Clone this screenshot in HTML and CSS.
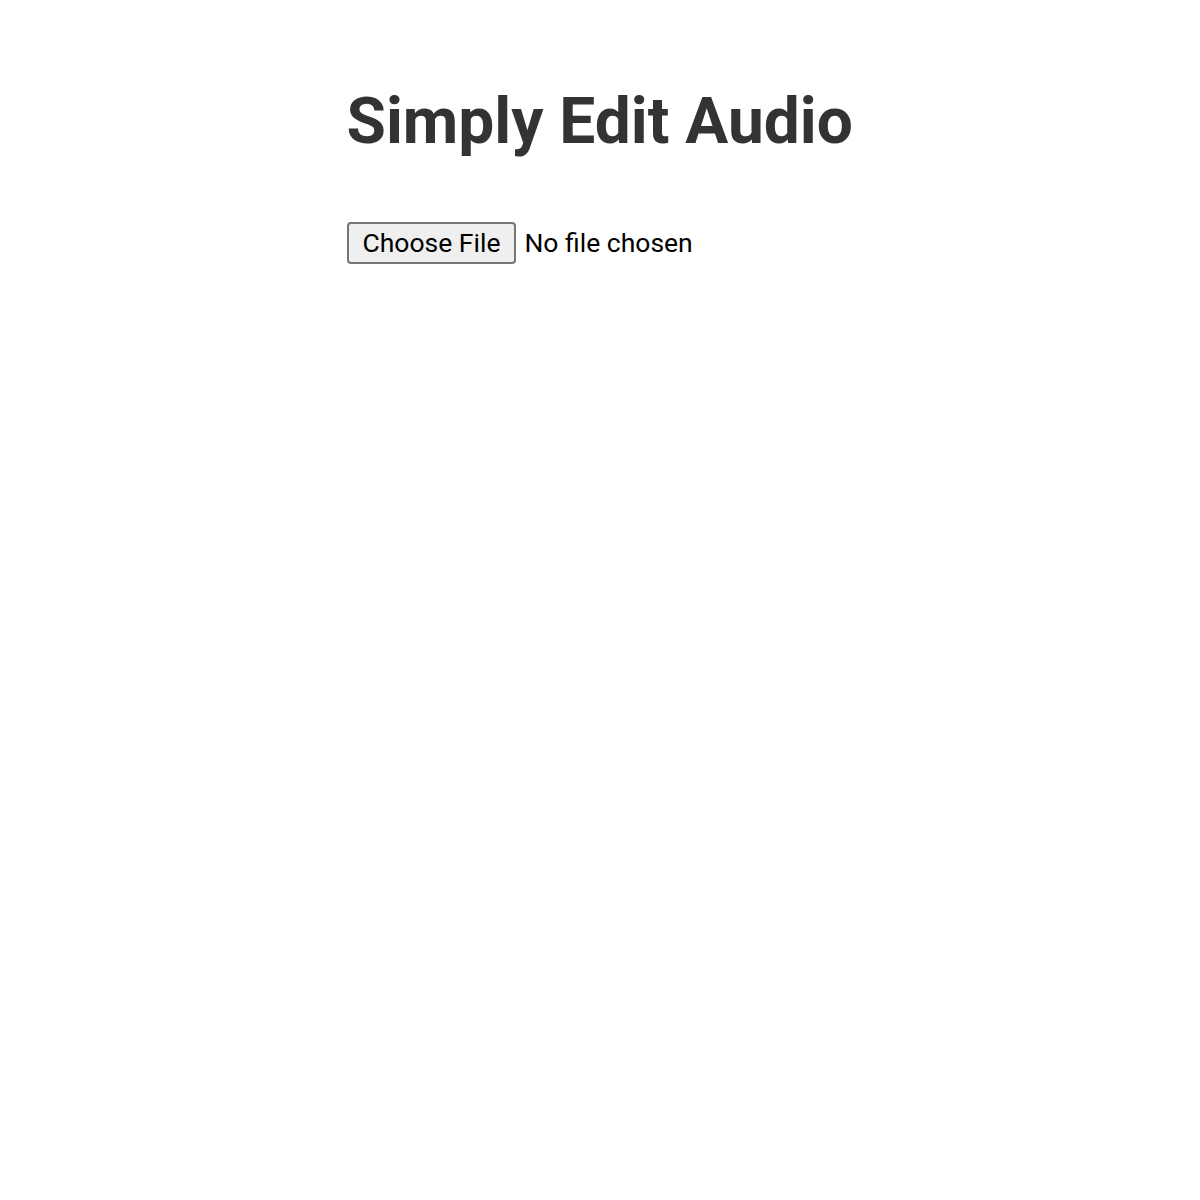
FILE: index.html
```html
<!DOCTYPE html>
<html lang="en">
<head>
<meta charset="utf-8">
<title>Simply Edit Audio</title>
<link rel="stylesheet" href="styles.css">
</head>
<body>
<main class="app">
  <h1 class="title">Simply Edit Audio</h1>
  <div class="upload">
    <input class="file" type="file" accept="audio/*">
  </div>
</main>
</body>
</html>
```

FILE: styles.css
```css
html, body {
  margin: 0;
  padding: 0;
  background: #ffffff;
}
body {
  font-family: Roboto, "Liberation Sans", sans-serif;
  color: #000;
}
.app {
  width: fit-content;
  margin: 0 auto;
  padding-top: 84px;
}
.title {
  margin: 0;
  font-size: 64px;
  font-weight: 700;
  color: #333333;
  line-height: 1.2;
}
.upload {
  margin-top: 61px;
}
.file {
  font-family: Roboto, "Liberation Sans", sans-serif;
  font-size: 26.5px;
  color: #000;
}
.file::file-selector-button {
  font-family: Roboto, "Liberation Sans", sans-serif;
  font-size: 26.5px;
  line-height: 30px;
  color: #000;
  background: #efefef;
  border: 2px solid #767676;
  border-radius: 4px;
  padding: 4px 14px;
  margin: 0 8px 0 0;
}
```
